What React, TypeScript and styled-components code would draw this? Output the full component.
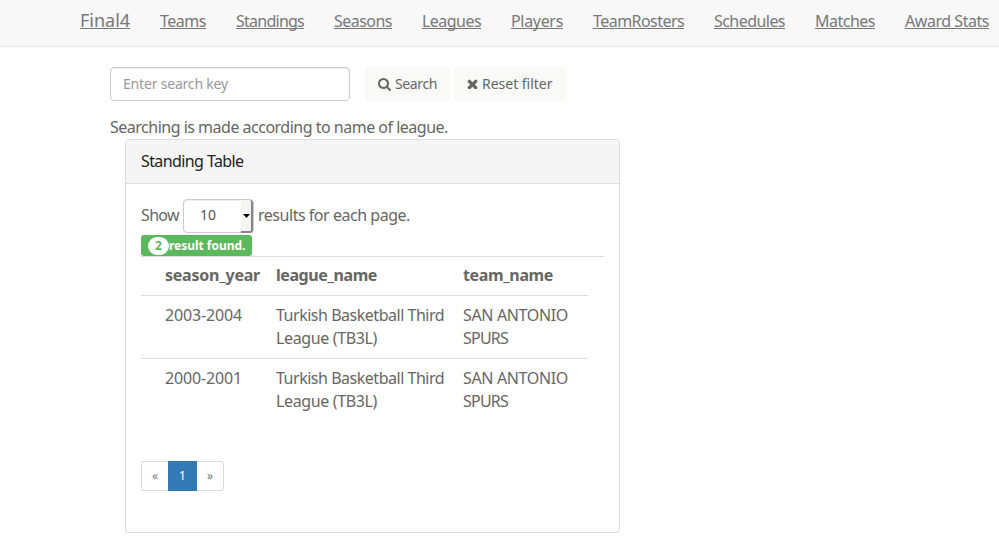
import React from "react";
import styled, { createGlobalStyle } from "styled-components";

const GlobalStyle = createGlobalStyle`
  * { box-sizing: border-box; }
  body {
    margin: 0;
    background: #fff;
    color: #666663;
    font: 16px/23px "Noto Sans", "Open Sans", sans-serif;
    overflow: hidden;
  }
`;

const Text = styled.span<{ $track?: number }>`
  letter-spacing: ${(p) => p.$track ?? 0}px;
  white-space: nowrap;
`;

const Navbar = styled.nav`
  display: flex;
  align-items: flex-start;
  gap: 30px;
  height: 47px;
  padding: 10px 0 0 80px;
  background: #f8f8f8;
  border-bottom: 1px solid #e7e7e7;
`;

const NavLink = styled.a<{ $width: number; $track: number; $brand?: boolean }>`
  flex: none;
  width: ${(p) => p.$width}px;
  height: 19px;
  border-bottom: 1px solid #777;
  color: #777;
  font-size: ${(p) => (p.$brand ? 18 : 16)}px;
  line-height: ${(p) => (p.$brand ? 21 : 22)}px;
  letter-spacing: ${(p) => p.$track}px;
  white-space: nowrap;
`;

const Content = styled.main`
  padding: 20px 0 0 110px;
`;

const SearchForm = styled.form`
  display: flex;
  height: 34px;
  font-size: 14px;
`;

const SearchInput = styled.input`
  width: 240px;
  height: 34px;
  margin-right: 15px;
  padding: 5px 12px 7px;
  border: 1px solid #ccc;
  border-radius: 4px;
  box-shadow: inset 0 1px 1px rgba(0, 0, 0, 0.075);
  font: 14px/20px "Noto Sans", "Open Sans", sans-serif;
  letter-spacing: -0.19px;
  outline: none;
  &::placeholder { color: #999; opacity: 1; }
`;

const Button = styled.button<{ $width: number }>`
  display: flex;
  align-items: center;
  gap: 4px;
  width: ${(p) => p.$width}px;
  height: 34px;
  margin-right: 4px;
  padding: 0 0 0 13px;
  border: 0;
  border-radius: 4px;
  background: #f9f9f8;
  color: #666663;
  font: 14px/20px "Noto Sans", "Open Sans", sans-serif;
`;

const Glyph = styled.svg`
  flex: none;
  fill: currentColor;
`;

const Note = styled.p`
  margin: 15px 0 0;
`;

const Panel = styled.section`
  width: 495px;
  height: 394px;
  margin-left: 15px;
  border: 1px solid #ddd;
  border-radius: 4px;
  box-shadow: 0 1px 1px rgba(0, 0, 0, 0.05);
`;

const PanelHeading = styled.header`
  height: 44px;
  padding: 10px 15px;
  border-bottom: 1px solid #ddd;
  border-radius: 3px 3px 0 0;
  background: #f5f5f5;
  color: #222;
`;

const PanelBody = styled.div`
  padding: 15px;
`;

const PageSize = styled.div`
  display: flex;
  height: 34px;
  line-height: 32px;
`;

const ShowText = styled(Text)`
  width: 42px;
`;

const Select = styled.div`
  display: flex;
  justify-content: space-between;
  width: 71px;
  height: 34px;
  margin-right: 4px;
  padding-left: 16px;
  border: 1px solid #ccc;
  border-radius: 4px;
  box-shadow: inset 0 1px 1px rgba(0, 0, 0, 0.075);
  color: #555;
  font-size: 14px;
  line-height: 30px;
`;

const SelectArrow = styled.span`
  display: flex;
  align-items: center;
  justify-content: center;
  width: 12px;
  height: 33px;
  border-right: 2px solid #858585;
  border-bottom: 2px solid #858585;
  border-radius: 0 3px 3px 0;
  background: #f5f5f4;
  color: #000;
`;

const ResultLabel = styled.div`
  display: flex;
  align-items: center;
  width: 111px;
  height: 21px;
  margin-top: 2px;
  padding-left: 7px;
  border-radius: 3px;
  background: #5cb85c;
  color: #fff;
  font-size: 12px;
  font-weight: 700;
  line-height: 20px;
`;

const Count = styled.span`
  width: 21px;
  height: 18px;
  border-radius: 9px;
  background: #fff;
  color: #5cb85c;
  line-height: 18px;
  text-align: center;
`;

const TableArea = styled.div`
  height: 205px;
  border-top: 1px solid #ddd;
`;

const Table = styled.div`
  width: 447px;
`;

const Row = styled.div<{ $head?: boolean }>`
  display: grid;
  grid-template-columns: 111px 187px 125px;
  padding: ${(p) => (p.$head ? "7px 0 8px 24px" : "8px 0 8px 24px")};
  border-top: ${(p) => (p.$head ? "0" : "1px solid #ddd")};
  font-weight: ${(p) => (p.$head ? 700 : 400)};
`;

const Cell = styled.div`
  display: flex;
  flex-direction: column;
`;

const Pagination = styled.ul`
  display: flex;
  width: 83px;
  height: 30px;
  margin: 0;
  padding: 0;
  list-style: none;
`;

const PageItem = styled.li<{ $active?: boolean; $edge?: "left" | "right" }>`
  width: ${(p) => (p.$active ? 29 : 27)}px;
  height: 30px;
  border: 1px solid ${(p) => (p.$active ? "#337ab7" : "#ddd")};
  border-${(p) => (p.$edge === "left" ? "right" : "left")}-width: ${(p) => (p.$edge ? 0 : 1)}px;
  border-radius: ${(p) => (p.$edge === "left" ? "3px 0 0 3px" : p.$edge === "right" ? "0 3px 3px 0" : "0")};
  background: ${(p) => (p.$active ? "#337ab7" : "#fff")};
  color: ${(p) => (p.$active ? "#fff" : "#777")};
  font-size: 12px;
  line-height: 27px;
  text-align: center;
`;

const links = [
  { label: "Final4", width: 50, track: -0.02, brand: true },
  { label: "Teams", width: 46, track: -0.48 },
  { label: "Standings", width: 68, track: -0.75 },
  { label: "Seasons", width: 58, track: -0.53 },
  { label: "Leagues", width: 59, track: -0.54 },
  { label: "Players", width: 52, track: -0.32 },
  { label: "TeamRosters", width: 91, track: -0.55 },
  { label: "Schedules", width: 71, track: -0.55 },
  { label: "Matches", width: 60, track: -0.5 },
  { label: "Award Stats", width: 84, track: -0.46 },
];

const seasons = ["2003-2004", "2000-2001"];

export default function App() {
  return (
    <>
      <GlobalStyle />
      <Navbar>
        {links.map((l) => (
          <NavLink key={l.label} $width={l.width} $track={l.track} $brand={l.brand}>
            {l.label}
          </NavLink>
        ))}
      </Navbar>
      <Content>
        <SearchForm>
          <SearchInput placeholder="Enter search key" />
          <Button type="button" $width={85}>
            <Glyph width="13" height="13" viewBox="0 128 1664 1664">
              <path d="M1152 832q0-185-131.5-316.5t-316.5-131.5-316.5 131.5-131.5 316.5 131.5 316.5 316.5 131.5 316.5-131.5 131.5-316.5zm512 832q0 52-38 90t-90 38q-54 0-90-38l-343-342q-179 124-399 124-143 0-273.5-55.5t-225-150-150-225-55.5-273.5 55.5-273.5 150-225 225-150 273.5-55.5 273.5 55.5 225 150 150 225 55.5 273.5q0 220-124 399l343 343q37 37 37 90z" />
            </Glyph>
            <Text $track={-0.36}>Search</Text>
          </Button>
          <Button type="button" $width={112}>
            <Glyph width="11" height="10" viewBox="302 302 1188 1188">
              <path d="M1490 1322q0 40-28 68l-136 136q-28 28-68 28t-68-28l-294-294-294 294q-28 28-68 28t-68-28l-136-136q-28-28-28-68t28-68l294-294-294-294q-28-28-28-68t28-68l136-136q28-28 68-28t68 28l294 294 294-294q28-28 68-28t68 28l136 136q28 28 28 68t-28 68l-294 294 294 294q28 28 28 68z" />
            </Glyph>
            <Text $track={-0.02}>Reset filter</Text>
          </Button>
        </SearchForm>
        <Note>
          <Text $track={-0.5}>Searching is made according to name of league.</Text>
        </Note>
        <Panel>
          <PanelHeading>
            <Text $track={-0.6}>Standing Table</Text>
          </PanelHeading>
          <PanelBody>
            <PageSize>
              <ShowText $track={-0.65}>Show</ShowText>
              <Select>
                10
                <SelectArrow>
                  <Glyph width="7" height="4" viewBox="0 0 7 4">
                    <path d="M0 0h7L3.5 4z" />
                  </Glyph>
                </SelectArrow>
              </Select>
              <Text $track={-0.47}>results for each page.</Text>
            </PageSize>
            <ResultLabel>
              <Count>2</Count>
              <Text $track={-0.03}>result found.</Text>
            </ResultLabel>
            <TableArea>
              <Table>
                <Row $head>
                  <Text $track={-0.24}>season_year</Text>
                  <Text $track={-0.43}>league_name</Text>
                  <Text $track={-0.38}>team_name</Text>
                </Row>
                {seasons.map((season) => (
                  <Row key={season}>
                    <Text $track={-0.15}>{season}</Text>
                    <Cell>
                      <Text $track={-0.48}>Turkish Basketball Third</Text>
                      <Text $track={-0.36}>League (TB3L)</Text>
                    </Cell>
                    <Cell>
                      <Text $track={-0.35}>SAN ANTONIO</Text>
                      <Text $track={-0.78}>SPURS</Text>
                    </Cell>
                  </Row>
                ))}
              </Table>
            </TableArea>
            <Pagination>
              <PageItem $edge="left">«</PageItem>
              <PageItem $active>1</PageItem>
              <PageItem $edge="right">»</PageItem>
            </Pagination>
          </PanelBody>
        </Panel>
      </Content>
    </>
  );
}
